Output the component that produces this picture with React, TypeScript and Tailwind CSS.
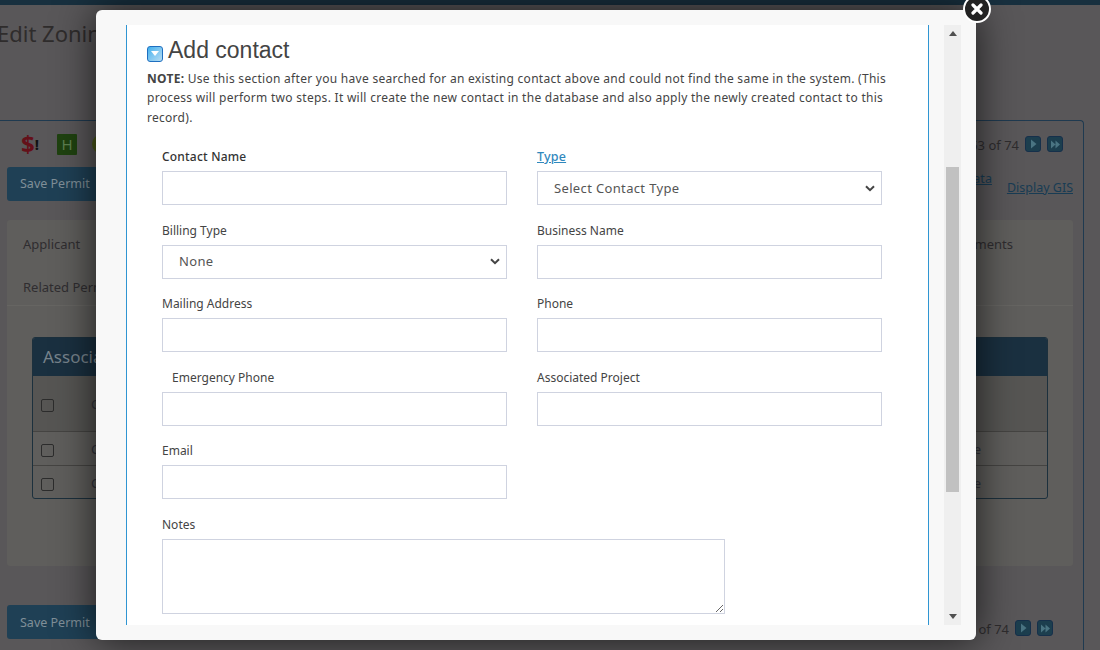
const font = { fontFamily: '"Noto Sans", sans-serif' };

function Field({ label, bold, pad, children }: { label: string; bold?: boolean; pad?: boolean; children?: React.ReactNode }) {
  return (
    <div className="flex h-[73.5px] w-[345px] flex-col">
      <label className={`h-[24px] text-[12px] leading-[19px] ${bold ? "font-medium tracking-[0.2px] text-[#333]" : "text-[#444]"} ${pad ? "pl-[10px]" : ""}`}>{label}</label>
      {children ?? <input className="h-[34px] w-full border border-[#cfd3e0] bg-white" />}
    </div>
  );
}

function Sel({ text }: { text: string }) {
  return (
    <div className="flex h-[34px] w-full items-center justify-between border border-[#cfd3e0] bg-white pl-[16px] pr-[6px] text-[13px] tracking-[0.35px] text-[#555]">
      <span className="relative top-[0.5px]">{text}</span>
      <svg width="10" height="7" viewBox="0 0 10 7"><path d="M1 1.2 5 5.2 9 1.2" fill="none" stroke="#444" strokeWidth="2" /></svg>
    </div>
  );
}

function NavBtn({ double }: { double?: boolean }) {
  return (
    <span className="flex h-[16px] w-[16px] items-center justify-center rounded-[3px] border border-[#16304b] bg-[#1c3e4e]">
      {double ? (
        <svg width="11" height="9" viewBox="0 0 11 9"><path d="M1 0.5 5.5 4.5 1 8.5ZM5.5 0.5 10 4.5 5.5 8.5Z" fill="#4a7482" /></svg>
      ) : (
        <svg width="9" height="10" viewBox="0 0 9 10"><path d="M2 0.5 7.5 5 2 9.5Z" fill="#4a7482" /></svg>
      )}
    </span>
  );
}

function Pager() {
  return (
    <div className="flex items-center gap-[6px] text-[13px] text-[#2e2c2e]">
      <span className="relative top-[2px]">53 of 74</span>
      <NavBtn />
      <NavBtn double />
    </div>
  );
}

function Check() {
  return <span className="h-[13px] w-[13px] rounded-[2px] border border-[#2c2c2c]" />;
}

export default function App() {
  return (
    <div className="relative h-[650px] w-[1100px] overflow-hidden bg-[#595759]" style={font}>
      {/* Page behind the dialog */}
      <div className="h-[5px] bg-[#18303f]" />
      <h1 className="ml-[-3px] mt-[13px] text-[22px] leading-[30px] text-[#2f2c2c]">Edit Zoning Permit</h1>
      <div className="mr-[16px] mt-[72px] h-[530px] rounded-tr-[4px] border-r border-t border-[#1f3a50]">
        <div className="flex h-[46px] items-center justify-between pr-[20px]">
          <div className="flex items-center pl-[21px]">
            <span className="flex w-[36px] items-center text-[24px] font-bold leading-none text-[#641019]">$<span className="text-[15px] text-[#111]">!</span></span>
            <span className="flex h-[21px] w-[20px] items-center justify-center rounded-[1px] bg-[#1f4210] text-[15px] text-[#5d7f4f]">H</span>
            <span className="ml-[15px] h-[20px] w-[20px] rounded-full bg-[#4d5a1a]" />
          </div>
          <Pager />
        </div>
        <div className="flex items-start justify-between pr-[10px]">
          <button className="ml-[7px] h-[34px] w-[120px] rounded-[3px] bg-[#1f4055] pl-[13px] text-left text-[12.5px] text-[#7f8f98]">Save Permit</button>
          <div className="flex items-start gap-[15px] text-[12.5px] text-[#183c54] underline">
            <span className="mt-[3px]">Data</span>
            <span className="mt-[12px]">Display GIS</span>
          </div>
        </div>
        <div className="ml-[7px] mt-[19px] h-[346px] w-[1066px] rounded-[3px] bg-[#5f5e5c]">
          <div className="h-[86px] border-b border-[#666562] px-[16px] text-[13px] text-[#2f2d30]">
            <div className="flex justify-between pt-[15px]">
              <span>Applicant</span>
              <span className="mr-[44px]">Attachments</span>
            </div>
            <div className="pt-[23px]">Related Permits</div>
          </div>
          <div className="ml-[25px] mt-[31px] h-[162px] w-[1016px] overflow-hidden rounded-[3px] border border-[#1c303d]">
            <div className="flex h-[38px] items-center bg-[#1a3040] pl-[10px] text-[17px] text-[#77838c]">Associated Contacts</div>
            <div className="flex h-[55px] items-center gap-[37px] bg-[#565553] pl-[8px] pt-[3px] text-[13px] text-[#33343c]">
              <Check />
              <span>Contact</span>
            </div>
            <div className="flex h-[34px] items-center justify-between border-t border-[#454442] pl-[8px] pr-[66px] pt-[3px] text-[13px] text-[#33343c]">
              <div className="flex items-center gap-[37px]"><Check /><span>Contact</span></div>
              <span>None</span>
            </div>
            <div className="flex h-[33px] items-center justify-between border-t border-[#454442] pl-[8px] pr-[66px] pt-[4px] text-[13px] text-[#33343c]">
              <div className="flex items-center gap-[37px]"><Check /><span>Contact</span></div>
              <span>None</span>
            </div>
          </div>
        </div>
        <div className="mt-[39px] flex items-center justify-between pr-[30px]">
          <button className="ml-[7px] h-[34px] w-[120px] rounded-[3px] bg-[#1f4055] pl-[13px] pt-[2px] text-left text-[12.5px] text-[#7f8f98]">Save Permit</button>
          <div className="mt-[12px]"><Pager /></div>
        </div>
      </div>

      {/* Dialog */}
      <div className="absolute left-[96px] top-[10px] flex h-[630px] w-[880px] rounded-[6px] bg-[#f8f8f8] py-[15px] pl-[30px] pr-[15px] shadow-[0_0_40px_rgba(0,0,0,0.7)]">
        <div className="h-[600px] w-[803px] overflow-hidden border-x border-[#2f95d2] bg-white pl-[20px]">
          <div className="flex h-[43.5px] items-end pb-[4px]">
            <span className="mb-[3px] mr-[5px] flex h-[16px] w-[16px] items-center justify-center rounded-[3px] border border-[#1f6fc0] bg-gradient-to-br from-[#3bb1ee] to-[#b5dcf2]">
              <svg width="8" height="5" viewBox="0 0 8 5"><path d="M0 0H8L4 5Z" fill="#fff" /></svg>
            </span>
            <h2 className="text-[23px] leading-[30px] text-[#444]" style={{ fontFamily: '"Liberation Sans", sans-serif' }}>Add contact</h2>
          </div>
          <p className="w-[750px] text-[12px] leading-[19.5px] tracking-[0.28px] text-[#444]">
            <b className="font-bold">NOTE:</b> Use this section after you have searched for an existing contact above and could not find the same in the system. (This process will perform two steps. It will create the new contact in the database and also apply the newly created contact to this record).
          </p>
          <div className="ml-[15px] mt-[20px] grid w-[720px] grid-cols-[345px_345px] gap-x-[30px]">
            <Field label="Contact Name" bold />
            <div className="flex h-[73.5px] flex-col">
              <a className="h-[24px] text-[12.5px] font-medium leading-[19px] tracking-[0.2px] text-[#2f88bd] underline">Type</a>
              <Sel text="Select Contact Type" />
            </div>
            <Field label="Billing Type"><Sel text="None" /></Field>
            <Field label="Business Name" />
            <Field label="Mailing Address" />
            <Field label="Phone" />
            <Field label="Emergency Phone" pad />
            <Field label="Associated Project" />
            <Field label="Email" />
            <div />
          </div>
          <div className="ml-[15px] flex flex-col">
            <label className="h-[24px] text-[12px] leading-[19px] text-[#444]">Notes</label>
            <textarea className="h-[75px] w-[563px] border border-[#cfd3e0] bg-white" />
          </div>
        </div>
        <div className="ml-[15px] flex h-[600px] w-[17px] flex-col items-center bg-[#efefef]">
          <div className="flex h-[17px] items-center justify-center">
            <svg width="8" height="5" viewBox="0 0 8 5"><path d="M0 5H8L4 0Z" fill="#505050" /></svg>
          </div>
          <div className="mt-[125px] h-[325px] w-[13px] bg-[#c1c1c1]" />
          <div className="flex flex-1 items-end">
            <div className="flex h-[17px] items-center justify-center">
              <svg width="8" height="5" viewBox="0 0 8 5"><path d="M0 0H8L4 5Z" fill="#505050" /></svg>
            </div>
          </div>
        </div>
      </div>

      {/* Close button */}
      <button className="absolute left-[963px] top-[-5px] flex h-[28px] w-[28px] items-center justify-center rounded-full border-[2px] border-white bg-[#222]">
        <svg width="12" height="12" viewBox="0 0 12 12"><path d="M2 2 10 10M10 2 2 10" stroke="#fff" strokeWidth="3.2" strokeLinecap="round" /></svg>
      </button>
    </div>
  );
}
